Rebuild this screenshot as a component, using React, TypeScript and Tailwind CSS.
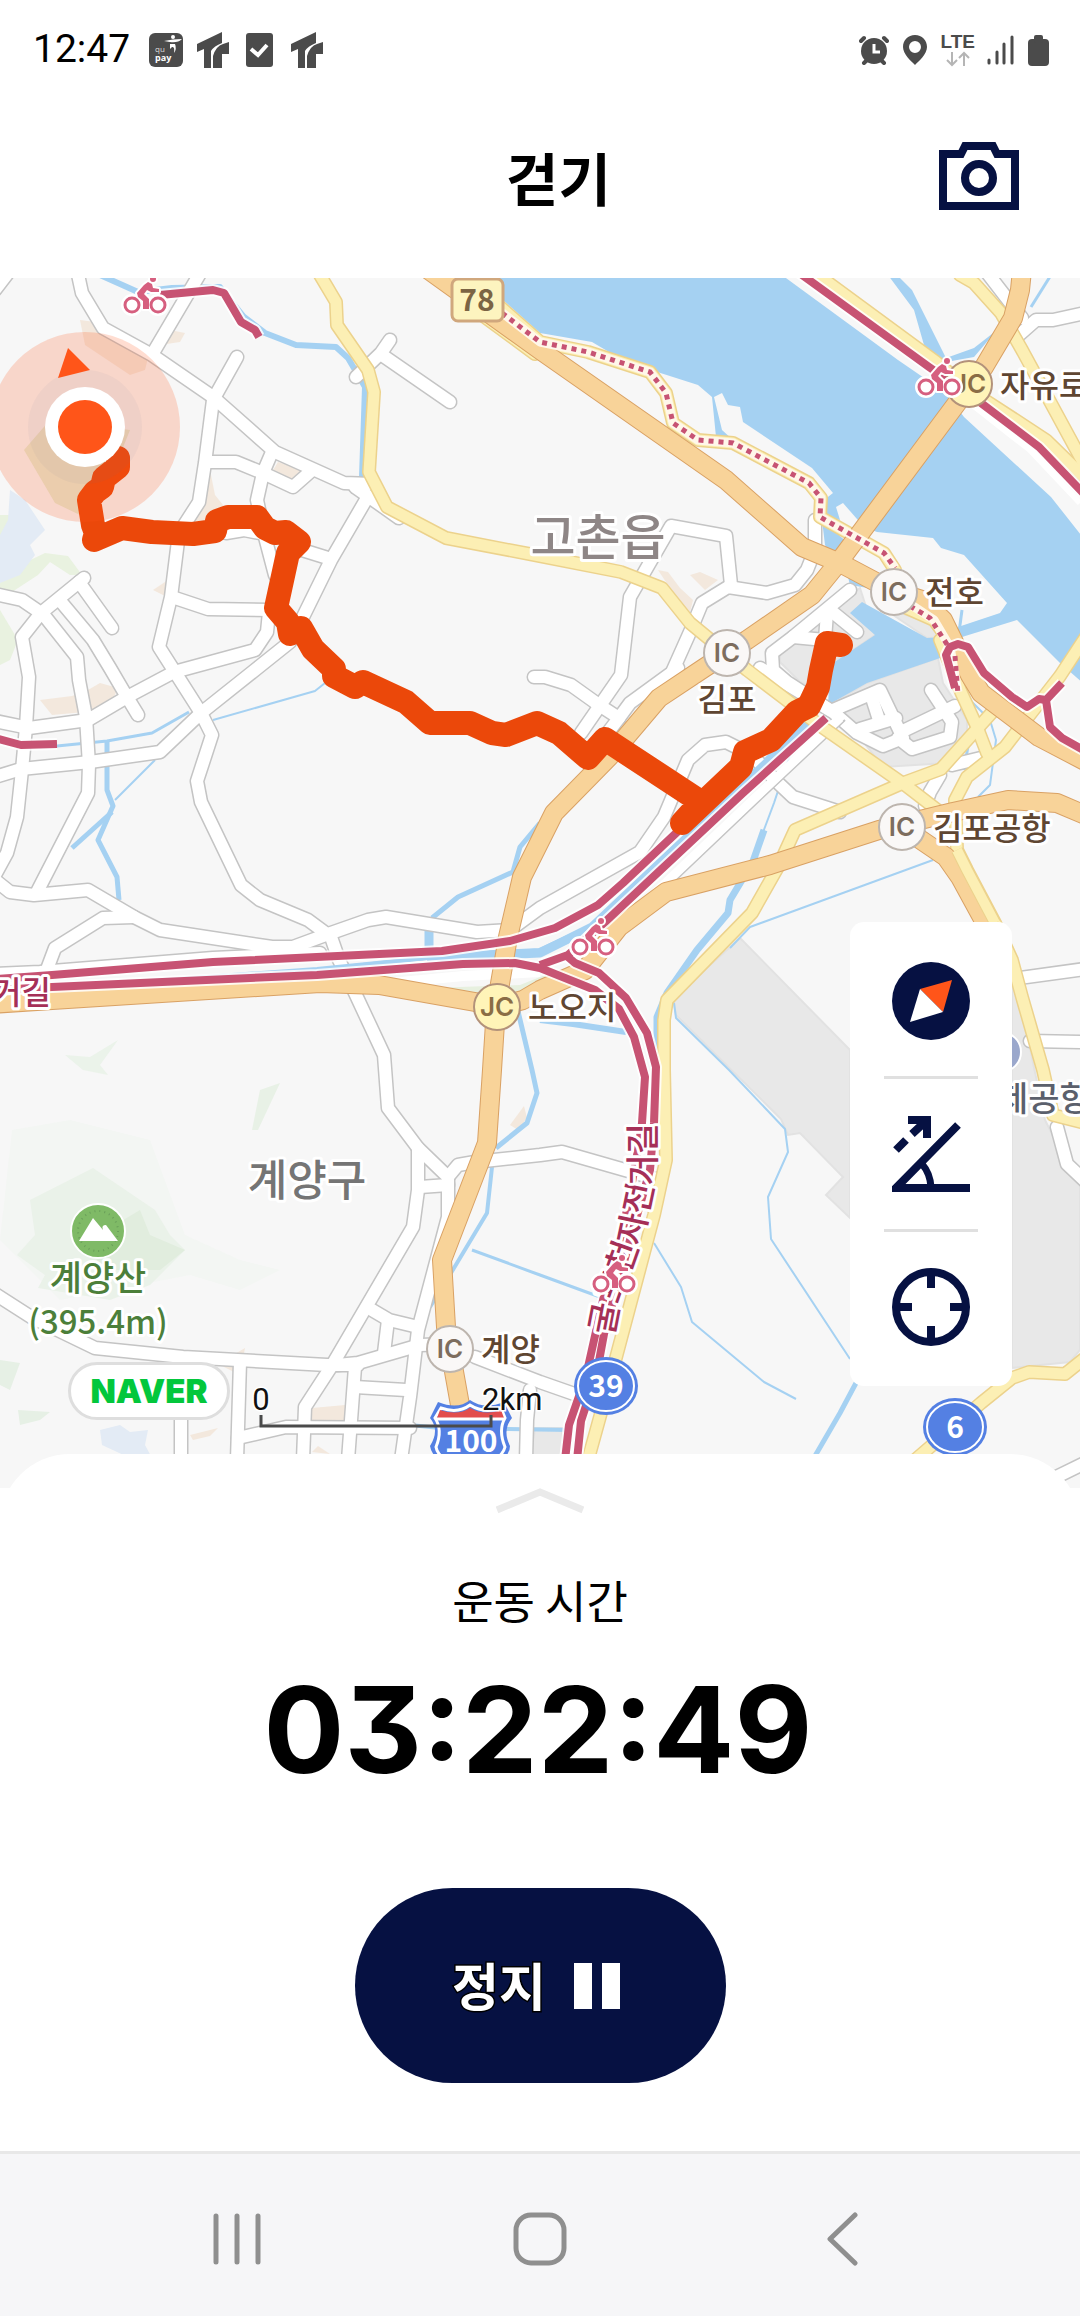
import React from "react";

const kr = "font-['Noto_Sans_CJK_KR','Noto_Sans',sans-serif]";
const NAVY = "#061142";

const streets = [
  "M77 270 L82 293 L103 328 L152 355 L213 397 L275 452 L344 483 L372 484",
  "M355 487 L399 518",
  "M202 270 L153 353",
  "M237 357 L213 400 L205 463 L199 502 L179 533 L171 597 L159 647 L201 713 L212 735 L197 781 L201 802 L241 885 L260 900 L308 920 L331 937 L339 960 L355 993 L384 1055 L388 1108 L418 1148 L448 1177",
  "M207 462 L236 462 L263 473 L293 487 L310 472",
  "M272 452 L263 473 L257 500 L265 537 L275 575",
  "M226 533 L244 530 L270 535",
  "M367 498 L331 560 L300 623 L290 642 L255 670 L201 713 L160 752 L90 762 L21 769 L-5 777",
  "M286 545 L331 559",
  "M172 597 L190 603 L208 609 L270 610",
  "M269 612 L267 632 L255 650 L174 672 L127 697 L88 720 L29 728 L-5 721",
  "M390 340 L381 353 L356 377",
  "M382 355 L450 402",
  "M-5 594 L22 600 L41 613 L84 578",
  "M79 582 L112 628",
  "M62 603 L93 640 L110 668 L127 697 L138 715",
  "M43 614 L77 657 L79 680 L86 717 L89 765 L88 793 L36 894",
  "M41 613 L22 637 L29 677 L26 727 L22 770 L17 817 L7 853 L-5 875",
  "M-5 880 L10 892 L34 895 L88 890 L134 917 L160 930 L272 947 L293 947 L331 933 L368 920 L386 917 L477 932 L510 930 L540 908 L640 852 L664 817 L688 760 L705 745 L726 742 L752 755 L775 780 L793 797 L840 812",
  "M134 917 L103 918 L55 948 L46 972",
  "M-5 974 L40 972 L213 958 L320 953",
  "M815 520 L815 550 L807 570 L795 585 L767 593 L728 587 L702 603 L690 632 L673 670",
  "M731 585 L726 536 L671 526 L630 597 L621 675 L581 733",
  "M534 677 L545 677 L571 685 L599 705 L619 718 L630 703 L678 668",
  "M619 718 L606 735",
  "M760 668 L833 712 L857 733 L883 746 L903 738 L880 690 L833 710",
  "M872 698 L879 720",
  "M860 729 L896 718",
  "M898 738 L912 749 L950 737 L952 722 L931 690",
  "M903 731 L955 706",
  "M850 590 L793 637 L772 653 L773 670 L787 682 L830 710",
  "M830 610 L857 632",
  "M827 612 L825 640 L793 637",
  "M985 270 L1022 318",
  "M1085 313 L1053 320 L1036 320 L1019 335",
  "M1012 979 L1085 969",
  "M1030 1041 L1085 1042",
  "M1057 1127 L1067 1164 L1085 1181",
  "M940 775 L930 792 L925 806",
  "M952 765 L985 757",
  "M448 1177 L458 1165 L475 1162 L540 1155 L562 1152 L660 1180",
  "M475 1357 L540 1382 L580 1396",
  "M530 1390 L527 1420 L526 1460",
  "M418 1148 L418 1190 L413 1227 L331 1367 L305 1407 L303 1460",
  "M420 1187 L448 1185",
  "M448 1177 L448 1217 L418 1330 L410 1397 L401 1460",
  "M372 1310 L389 1320 L418 1327",
  "M388 1320 L384 1353",
  "M337 1365 L358 1363 L420 1345 L450 1344",
  "M-5 1294 L31 1317 L95 1348 L183 1357 L327 1365 L358 1365",
  "M181 1360 L181 1460",
  "M240 1362 L237 1460",
  "M355 1367 L348 1460",
  "M238 1438 L286 1427 L410 1428",
  "M355 1387 L406 1390",
  "M1040 1485 L1085 1463",
  "M-5 290 L8 273",
];

const yellowRoads = [
  "M317 270 L336 302 L337 325 L368 370 L374 392 L369 472 L387 507 L446 538 L540 556 L621 572 L662 588 L690 623 L747 670 L822 727 L905 785 L940 812",
  "M1085 638 L1060 676 L1018 730 L1005 747 L967 777 L955 800 L957 850 L967 870 L995 923 L1012 960 L1022 997 L1043 1070 L1053 1115 L1085 1123",
  "M995 709 L941 769 L903 783 L795 830 L778 867 L752 913 L667 1000 L664 1020 L664 1070 L666 1160 L654 1215 L609 1384 L588 1460",
  "M940 640 L961 692 L977 727 L987 753",
  "M960 275 L974 283 L1001 313 L1022 350 L1085 466",
  "M811 270 L936 362 L974 393 L1046 440 L1085 478",
  "M1085 1358 L1065 1374 L1029 1372 L1012 1378 L981 1403 L915 1460",
  "M478 312 L535 354",
  "M498 305 L540 342 L588 352 L650 372 L666 393 L673 423 L698 440 L733 443 L809 483 L821 498 L820 517 L884 553 L895 570 L888 585",
  "M900 605 L934 620 L945 635",
];

const orangeRoads = [
  "M-10 1004 L52 1000 L320 983 L379 985 L475 1002 L497 1007 L523 1000 L540 990 L585 970 L619 927 L666 892 L770 865 L879 830 L953 812 L1008 800 L1057 803 L1090 817",
  "M902 827 L946 857 L960 877 L990 932",
  "M1022 270 L1020 290 L1013 318 L984 367 L957 403 L838 563 L812 595 L747 640 L704 668 L659 698 L609 757 L554 813 L522 877 L508 937 L496 1007 L492 1070 L487 1143 L442 1260 L446 1327 L460 1405",
  "M430 271 L540 350 L726 480 L802 547 L840 563 L891 590 L922 600 L943 620 L970 675 L981 693 L1039 737 L1085 761",
];

const pinkTrails = [
  "M160 295 L213 290 L224 293 L241 322 L255 330 L259 337",
  "M-5 738 L21 745 L57 744",
  "M-5 979 L52 975 L213 962 L442 951 L510 941 L555 928 L598 905 L623 883 L690 820",
  "M-5 990 L52 987 L317 975 L463 964 L515 963 L540 968 L595 990 L619 1009 L634 1037 L645 1077 L642 1123 L638 1150 L625 1220 L603 1300 L586 1376 L569 1425 L565 1460",
  "M826 718 L743 793 L605 922 L568 955 L540 965",
  "M568 957 L575 963 L599 973 L626 998 L647 1033 L656 1067 L654 1123 L650 1170 L630 1240 L604 1334 L597 1372 L581 1421 L577 1460",
  "M798 272 L929 367 L981 403 L1039 447 L1085 495",
  "M955 688 L946 655 L950 647 L958 644 L968 647 L984 673 L1012 697 L1027 707 L1039 699 L1046 700 L1062 683",
  "M1046 700 L1050 727 L1062 738 L1085 751",
];

const streams: [string, number][] = [
  ["M100 275 L138 292 L172 288 L220 287 L244 317 L265 333 L296 345 L336 347 L348 358 L365 387 L362 477", 6],
  ["M57 746 L107 741 L152 733 L189 712", 3],
  ["M107 740 L107 790 L113 806 L98 840 L117 877 L119 900", 5],
  ["M112 812 L72 848", 5],
  ["M155 760 L115 800", 2],
  ["M213 720 L315 691 L325 683", 2],
  ["M540 823 L520 847 L513 872 L458 897 L432 918", 5],
  ["M429 930 L429 955", 9],
  ["M517 1007 L532 1070 L537 1093 L527 1123 L496 1148", 5],
  ["M492 1167 L487 1213 L451 1273 L430 1307", 4],
  ["M472 1250 L540 1275 L600 1297", 3],
  ["M410 1425 L440 1428 L570 1430", 4],
  ["M540 1020 L573 1024 L626 1032", 6],
  ["M80 990 L317 970 L427 958 L500 955", 4],
  ["M440 958 L540 953 L592 927 L692 833 L809 722", 9],
  ["M790 755 L774 803 L762 835", 2],
  ["M764 830 L750 870", 7],
  ["M742 880 L730 900 L728 913 L697 950 L667 993 L657 1017 L657 1050", 7],
  ["M933 860 L750 927 L730 948", 2],
  ["M674 1003 L676 1018 L729 1070 L785 1129 L788 1152 L768 1197 L771 1239 L850 1359", 2],
  ["M654 1243 L681 1287 L692 1322 L764 1382 L796 1399", 2],
  ["M856 1383 L840 1413 L815 1456", 5],
  ["M1051 275 L1031 307", 3],
  ["M958 640 L962 610", 3],
  ["M970 700 L990 720 L996 740 L990 785 L978 797", 2],
  ["M969 740 L964 770", 3],
];

const greyBlocks = [
  "M740 938 L850 1050 L850 1218 L826 1195 L843 1177 L800 1133 L788 1135 L781 1119 L676 1015 L673 998 L728 949 Z",
  "M1012 985 L1022 1010 L1045 1120 L1070 1170 L1080 1178 V1350 L1070 1362 L1012 1368 Z",
  "M833 703 L867 683 L938 658 L943 683 L967 720 L967 740 L947 763 L883 767 Z",
  "M860 588 L875 635 L850 652 L835 660 L822 690 L800 682 L780 662 L780 650 L800 630 Z",
  "M880 606 L930 623 L947 637 L927 638 Z",
  "M535 1428 H562 V1460 H530 Z",
];

const beigePatches = [
  "M80 320 L95 322 L150 350 L145 370 L130 375 L85 345 Z",
  "M170 330 L185 333 L180 342 L160 345 Z",
  "M210 470 L215 495 L223 505 L218 530 L190 530 L205 495 Z",
  "M278 462 L302 470 L290 480 L272 472 Z",
  "M40 700 L72 696 L88 690 L100 683 L118 688 L110 706 L85 712 L52 715 Z",
  "M168 580 L167 597 L153 590 Z",
  "M658 570 L668 572 L680 588 L693 600 L690 612 L678 600 Z",
  "M690 575 L700 572 L718 580 L705 590 Z",
  "M312 1408 L345 1405 L345 1422 L312 1422 Z",
  "M190 1435 L218 1428 L210 1436 L193 1440 Z",
  "M218 1364 L245 1348 L240 1375 Z",
  "M524 1106 L527 1118 L518 1130 L510 1125 Z",
  "M312 1452 L318 1446 L330 1454 Z",
];

const greenPatches: [string, string][] = [
  ["M12 1130 L70 1120 L150 1140 L185 1235 L240 1260 L280 1270 L240 1290 L190 1275 L60 1300 L0 1240 Z", "#f3f6f3"],
  ["M30 1200 L93 1168 L155 1210 L170 1235 L185 1250 L150 1285 L110 1300 L38 1288 L45 1275 L17 1255 L35 1235 Z", "#eaf2e9"],
  ["M140 1210 L150 1235 L185 1250 L160 1270 L100 1270 L90 1240 Z", "#e1edde"],
  ["M118 1040 L100 1065 L108 1075 L83 1070 L65 1055 L90 1057 Z", "#ebf3ea"],
  ["M280 1083 L260 1090 L252 1130 L258 1130 Z", "#e8f1e6"],
  ["M0 1360 L20 1363 L10 1390 L0 1385 Z", "#e6f0e5"],
  ["M18 1410 L50 1412 L40 1420 L20 1425 Z", "#e6f0e5"],
  ["M0 580 L20 565 L45 553 L68 556 L82 575 L70 575 L50 562 L38 575 L15 590 L0 600 Z", "#e9f2e0"],
  ["M0 515 L10 515 L5 545 L0 550 Z", "#e9f2e0"],
  ["M0 610 L18 640 L10 660 L0 665 Z", "#e9f2e0"],
  ["M24 450 L50 420 L130 430 L110 480 L80 515 L55 503 Z", "#e6ebd2"],
  ["M430 988 L520 985 L545 975 L560 975 L530 1000 L490 1000 Z", "#e7f0df"],
  ["M10 490 L25 500 L45 530 L30 545 L35 555 L20 575 L0 583 V535 L8 520 Z", "#e3ebf5"],
  ["M100 1430 L120 1425 L130 1432 L148 1430 L145 1445 L152 1458 H130 L102 1445 Z", "#e3ebf5"],
];

const junctions = [
  { x: 727, y: 653, kind: "IC" },
  { x: 894, y: 592, kind: "IC" },
  { x: 902, y: 827, kind: "IC" },
  { x: 450, y: 1349, kind: "IC" },
  { x: 497, y: 1007, kind: "JC" },
  { x: 969, y: 384, kind: "JC" },
];

const routeTrack =
  "M118 458 L118 467 L104 478 L102 487 L95 492 L89 500 L93 525 L96 533 L94 540 L122 528 L152 532 L193 534 L215 531 L217 521 L228 517 L257 517 L265 528 L275 533 L286 532 L299 542 L288 553 L276 608 L288 622 L290 634 L301 628 L313 649 L334 669 L334 676 L355 687 L363 682 L406 702 L430 723 L470 723 L492 733 L506 735 L537 723 L559 733 L588 758 L605 739 L701 802 L682 823 L741 767 L745 752 L771 740 L797 712 L809 706 L818 687 L821 670 L827 643 L841 645";

function Cased({ paths, outer, inner, edge, fill }: { paths: string[]; outer: number; inner: number; edge: string; fill: string }) {
  return (
    <g fill="none" strokeLinejoin="round" strokeLinecap="round">
      {paths.map((d) => (
        <path key={d} d={d} stroke={edge} strokeWidth={outer} />
      ))}
      {paths.map((d) => (
        <path key={d} d={d} stroke={fill} strokeWidth={inner} />
      ))}
    </g>
  );
}

function Bike({ x, y }: { x: number; y: number }) {
  const rider = "M-8 -3 L-1 -11 L3 -14 L7 -12 L8 -8 L14 -7 L14 -4 L6 -4 L2 -6 L-1 -2 L4 3 V13 H-2 V5 L-7 1 Z";
  return (
    <g transform={`translate(${x} ${y})`} strokeLinejoin="round">
      <g fill="#fff" stroke="#fff" strokeWidth="4">
        <circle cx="-13" cy="9" r="9" />
        <circle cx="13" cy="9" r="9" />
        <circle cx="8" cy="-17" r="3" />
        <path d={rider} />
      </g>
      <circle cx="-13" cy="9" r="7" fill="#fff" stroke="#d65f7f" strokeWidth="3" />
      <circle cx="13" cy="9" r="7" fill="#fff" stroke="#d65f7f" strokeWidth="3" />
      <g fill="#d65f7f">
        <circle cx="8" cy="-17" r="3" />
        <path d={rider} />
      </g>
    </g>
  );
}

function Label({ x, y, size, color, anchor = "start", weight = 500, children }: { x: number; y: number; size: number; color: string; anchor?: "start" | "middle"; weight?: number; children: string }) {
  return (
    <text x={x} y={y} fontSize={size} fontWeight={weight} fill={color} stroke="#fff" strokeWidth="6" strokeLinejoin="round" paintOrder="stroke" textAnchor={anchor}>
      {children}
    </text>
  );
}

function MapCanvas() {
  return (
    <svg viewBox="0 278 1080 1210" className={`block h-auto w-full ${kr}`} role="img" aria-label="지도">
      <rect x="0" y="278" width="1080" height="1210" fill="#f7f7f7" />
      {greenPatches.map(([d, c]) => (
        <path key={d} d={d} fill={c} />
      ))}
      {beigePatches.map((d) => (
        <path key={d} d={d} fill="#f3e8dd" />
      ))}
      <path
        fill="#a5d1f2"
        d="M495 270 L503 300 L540 333 L592 342 L626 362 L698 385 L712 397 L716 437 L733 440 L722 430 L714 397 L722 393 L728 405 L740 407 L743 422 L812 468 L833 493 L824 500 L826 517 L840 520 L836 507 L843 503 L864 527 L877 532 L933 538 L941 548 L964 555 L1007 603 L1000 613 L958 627 L962 637 L1017 620 L1060 663 L1085 685 V540 L1051 497 L964 417 L946 393 L898 360 L775 270 Z"
      />
      <path fill="#a5d1f2" d="M888 275 L914 310 L926 352 L946 362 L974 357 L997 330 L974 348 L946 358 L912 290 L897 275 Z" />
      <path fill="#a5d1f2" d="M822 520 L850 545 L840 568 L825 545 Z M845 565 L870 573 L890 580 L880 590 L850 585 Z" />
      {greyBlocks.map((d) => (
        <path key={d} d={d} fill="#e8e8e8" stroke="#e2e2e2" strokeWidth="2" />
      ))}
      <path fill="#a5d1f2" d="M862 602 L927 638 L945 637 L943 657 L867 683 L828 705 L830 665 L875 635 L850 613 Z" />
      <g fill="none" stroke="#a5d1f2" strokeLinejoin="round">
        {streams.map(([d, w]) => (
          <path key={d} d={d} strokeWidth={w} />
        ))}
      </g>
      <Cased paths={streets} outer={15} inner={12} edge="#c4c4c4" fill="#fff" />
      <path d="M970 403 L1030 450 L1080 503" stroke="#fff" strokeWidth="6" fill="none" />
      <path d="M845 720 L760 800 L660 895" stroke="#c4c4c4" strokeWidth="2" fill="none" />
      <path d="M840 718 L755 798 L655 893" stroke="#fff" strokeWidth="9" fill="none" />
      <path d="M380 984 L463 976 L540 972" stroke="#fff" strokeWidth="10" fill="none" />
      <path d="M80 986 L317 969 L427 958" stroke="#a5d1f2" strokeWidth="4" fill="none" />
      <path d="M427 957 L540 952 L592 928 L692 833 L809 722" stroke="#a5d1f2" strokeWidth="8" fill="none" />
      <Cased paths={yellowRoads} outer={14} inner={11} edge="#ecd28c" fill="#fcefb4" />
      <Cased paths={orangeRoads} outer={20} inner={18} edge="#d9a164" fill="#f8d399" />
      <path d="M957 850 L967 870 L995 923" stroke="#ecd28c" strokeWidth="12" fill="none" />
      <path d="M957 850 L967 870 L995 923" stroke="#fcefb4" strokeWidth="10" fill="none" />
      <g fill="none">
        <path d="M500 311 L540 342 L588 352 L650 372 L666 393 L673 423 L698 440 L733 443 L809 483 L821 498 L820 517 L884 553 L895 568 M910 604 L934 620 L950 647 L958 692" stroke="#fff7ea" strokeWidth="9" strokeLinejoin="round" />
        {pinkTrails.map((d) => (
          <path key={d} d={d} stroke="#fff" strokeOpacity="0.85" strokeWidth="12" strokeLinejoin="round" />
        ))}
        <path d="M502 313 L540 342 L588 352 L650 372 L666 393 L673 423 L698 440 L733 443 L809 483 L821 498 L820 517 L884 553 L895 568 M910 606 L930 618 L948 646 M955 656 L958 695" stroke="#c75373" strokeWidth="5" strokeDasharray="5 5" />
        {pinkTrails.map((d) => (
          <path key={d} d={d} stroke="#c75373" strokeWidth="8" strokeLinejoin="round" />
        ))}
      </g>

      {junctions.map(({ x, y, kind }) => (
        <g key={`${x}-${y}`}>
          <circle cx={x} cy={y} r="23" fill={kind === "IC" ? "#faf8f7" : "#fff4b8"} stroke={kind === "IC" ? "#bdb5ae" : "#b3927a"} strokeWidth="2" />
          <text x={x} y={y + 9} fontSize="26" fontWeight="600" textAnchor="middle" fill={kind === "IC" ? "#7d6d5e" : "#8a6d45"} className="font-['Inter',sans-serif]">
            {kind}
          </text>
        </g>
      ))}

      <rect x="452" y="279" width="51" height="42" rx="6" fill="#fdf4bf" stroke="#d0a77d" strokeWidth="3" />
      <text x="477" y="311" fontSize="30" fontWeight="700" textAnchor="middle" fill="#7b6444">78</text>

      {[
        { x: 606, y: 1386, n: "39" },
        { x: 955, y: 1427, n: "6" },
      ].map(({ x, y, n }) => (
        <g key={n}>
          <ellipse cx={x} cy={y} rx="32" ry="29" fill="#5480e3" />
          <ellipse cx={x} cy={y} rx="28" ry="25" fill="none" stroke="#fff" strokeWidth="2" />
          <text x={x} y={y + 11} fontSize="30" fontWeight="700" textAnchor="middle" fill="#fff">{n}</text>
        </g>
      ))}

      <g>
        <path d="M438 1402 Q458 1410 470 1400 Q484 1410 504 1402 L512 1418 Q502 1430 510 1446 Q510 1462 470 1480 Q432 1462 430 1446 Q440 1430 430 1418 Z" fill="#5480e3" />
        <path d="M441 1408 Q458 1414 470 1405 Q484 1414 501 1408 L505 1418 Q498 1430 505 1447 Q502 1460 470 1474 Q438 1460 436 1447 Q443 1430 435 1418 Z" fill="#5480e3" stroke="#fff" strokeWidth="3" />
        <path d="M440 1410 Q458 1416 470 1408 Q484 1416 501 1410 L504 1418 H437 Z" fill="#e24d4d" />
        <path d="M436 1419 H505" stroke="#fff" strokeWidth="3" />
        <text x="471" y="1452" fontSize="30" fontWeight="700" textAnchor="middle" fill="#fff">100</text>
      </g>

      <circle cx="1001" cy="1052" r="20" fill="#9ba8cc" stroke="#fff" strokeWidth="2" />
      <circle cx="98" cy="1231" r="27" fill="#7fba66" stroke="#fff" strokeWidth="2" />
      <circle cx="98" cy="1231" r="20" fill="none" stroke="#6a9f5a" strokeWidth="2" strokeDasharray="1 4" />
      <path d="M79 1241 L93 1218 L103 1230 Q101 1225 106 1225 L118 1241 Z" fill="#fff" />

      <Label x={598} y={555} size={49} color="#8e8686" anchor="middle">고촌읍</Label>
      <Label x={307} y={1196} size={43} color="#757575" anchor="middle">계양구</Label>
      <Label x={727} y={711} size={32} color="#5f4632" anchor="middle">김포</Label>
      <Label x={925} y={604} size={32} color="#5f4632">전호</Label>
      <Label x={1000} y={397} size={32} color="#5f4632">자유로</Label>
      <Label x={933} y={840} size={32} color="#5f4632">김포공항</Label>
      <Label x={528} y={1019} size={32} color="#5f4632">노오지</Label>
      <Label x={481} y={1361} size={32} color="#5f4632">계양</Label>
      <Label x={997} y={1111} size={34} color="#5b606c">제공항</Label>
      <Label x={98} y={1291} size={35} color="#4c7f3a" anchor="middle">계양산</Label>
      <Label x={98} y={1334} size={33} color="#4c7f3a" anchor="middle">(395.4m)</Label>
      <Label x={-8} y={1004} size={32} color="#a52f57">거길</Label>
      <path id="trail-name" d="M613 1336 L620 1300 L644 1232 L655 1180 L655 1115" fill="none" />
      <text fontSize="34" fontWeight="500" fill="#a52f57" stroke="#fff" strokeWidth="6" strokeLinejoin="round" paintOrder="stroke">
        <textPath href="#trail-name">굴포천자전거길</textPath>
      </text>

      <Bike x={145} y={296} />
      <Bike x={939} y={378} />
      <Bike x={593} y={938} />
      <Bike x={614} y={1275} />

      <path d={routeTrack} fill="none" stroke="#eb480a" strokeWidth="24" strokeLinejoin="round" strokeLinecap="round" />
      <circle cx="85" cy="427" r="95" fill="#ff5519" fillOpacity="0.2" />
      <circle cx="85" cy="427" r="57" fill="#6478a0" fillOpacity="0.06" />
      <circle cx="85" cy="427" r="40" fill="#fff" />
      <circle cx="85" cy="427" r="27" fill="#ff5519" />
      <path d="M68 348 L90 370 L58 378 Z" fill="#ff5519" />

      <path d="M261 1415 V1426 H491 V1415" fill="none" stroke="#4a4a4a" strokeWidth="3" />
      <g fontSize="31" fill="#111" stroke="#fff" strokeWidth="3" paintOrder="stroke" className="font-['Roboto',sans-serif]">
        <text x="261" y="1410" textAnchor="middle">0</text>
        <text x="482" y="1410">2km</text>
      </g>
    </svg>
  );
}

function TrIcon() {
  return (
    <svg width="32" height="36" viewBox="0 0 32 36" fill="#4b4b4b" aria-hidden="true">
      <path d="M0 12 L25 0 V11 Q17 14 14 19 V36 H7 V17 L0 20 Z" />
      <path d="M16 36 V24 Q19 14 26 12 L32 10 V22 H25 V36 Z" />
    </svg>
  );
}

function StatusBar() {
  return (
    <div className="flex h-[98px] items-center justify-between pr-[31px] pl-[33px]">
      <div className="flex items-center">
        <span className="font-['Roboto',sans-serif] text-[39px] leading-[44px] text-black">12:47</span>
        <div className="ml-[19px] flex items-center gap-3.5 pt-0.5">
          <svg width="34" height="34" viewBox="0 0 34 34" aria-hidden="true">
            <rect width="34" height="34" rx="6" fill="#4b4b4b" />
            <path d="M15 8 Q24 6 33 6 Q29 10 21 9 Z M21 11 H26 Q28 16 25 20 Q26 13 23 14 L21 16 Z" fill="#fff" />
            <circle cx="24" cy="4" r="2" fill="#fff" />
            <text x="6" y="19" fontSize="8" fill="#ddd" className="font-['Open_Sans',sans-serif]">qu</text>
            <text x="6" y="28" fontSize="9" fontWeight="700" fill="#fff" className="font-['Open_Sans',sans-serif]">pay</text>
          </svg>
          <TrIcon />
          <svg width="34" height="34" viewBox="0 0 34 34" aria-hidden="true">
            <rect x="3" width="27" height="34" rx="3" fill="#4b4b4b" />
            <path d="M8 16 L15 22 L24 12" fill="none" stroke="#fff" strokeWidth="4" />
          </svg>
          <TrIcon />
        </div>
      </div>
      <div className="flex items-center pt-0.5">
        <svg width="30" height="30" viewBox="0 0 30 30" className="mr-3.5" aria-hidden="true">
          <circle cx="15" cy="16" r="13" fill="#4b4b4b" />
          <g stroke="#4b4b4b" strokeWidth="4" strokeLinecap="round">
            <path d="M2 6 L5 3 M28 6 L25 3 M5 28 L8 25 M25 28 L22 25" />
          </g>
          <path d="M15 9 V17 H21" stroke="#fff" strokeWidth="3" fill="none" />
        </svg>
        <svg width="24" height="30" viewBox="0 0 24 30" className="mr-3.5" aria-hidden="true">
          <path fillRule="evenodd" d="M12 0 C5 0 0 5 0 12 C0 19 8 26 12 30 C16 26 24 19 24 12 C24 5 19 0 12 0 Z M12 6 A6 6 0 1 1 12 18 A6 6 0 1 1 12 6 Z" fill="#4b4b4b" />
        </svg>
        <div className="mr-3 flex flex-col items-center">
          <span className="font-['Liberation_Sans',sans-serif] text-[19px] leading-[18px] font-bold text-[#4b4b4b]">LTE</span>
          <svg width="24" height="16" viewBox="0 0 24 16" fill="none" stroke="#b5b5b5" strokeWidth="2" aria-hidden="true">
            <path d="M6 1 V14 M1 9 L6 14 L11 9 M18 15 V2 M13 7 L18 2 L23 7" />
          </svg>
        </div>
        <svg width="27" height="30" viewBox="0 0 27 30" className="mr-3.5" stroke="#4b4b4b" strokeWidth="3" strokeLinecap="round" aria-hidden="true">
          <path d="M2 25 V28 M10 17 V28 M17 9 V28 M25 2 V28" />
        </svg>
        <svg width="21" height="31" viewBox="0 0 21 31" fill="#4b4b4b" aria-hidden="true">
          <rect y="4" width="21" height="27" rx="4" />
          <rect x="6" width="9" height="8" rx="2" />
        </svg>
      </div>
    </div>
  );
}

function MapButton({ label, children }: { label: string; children: React.ReactNode }) {
  return (
    <button type="button" aria-label={label} className="flex h-[150px] w-full items-center justify-center">
      {children}
    </button>
  );
}

export default function App() {
  return (
    <div className={`flex min-h-screen flex-col bg-white text-black ${kr}`}>
      <StatusBar />

      <header className="grid h-[180px] grid-cols-[1fr_auto_1fr] items-center pr-[61px] pb-6 pl-[98px]">
        <h1 className="col-start-2 text-[57px] leading-[64px] font-bold">걷기</h1>
        <button type="button" aria-label="카메라" className="justify-self-end">
          <svg width="80" height="68" viewBox="0 0 80 68" fill="none" stroke={NAVY} strokeWidth="8" aria-hidden="true">
            <path d="M4 12 H22 L26 4 H54 L58 12 H76 V64 H4 Z" />
            <circle cx="40" cy="36" r="14" />
          </svg>
        </button>
      </header>

      <main className="flex flex-1 flex-col">
        <section className="relative overflow-hidden">
          <MapCanvas />
          <a
            href="#naver"
            className="absolute bottom-[68px] left-[68px] flex h-[58px] w-[162px] items-center justify-center rounded-full border-3 border-[#dedede] bg-white font-['Inter',sans-serif] text-[33px] leading-none font-black text-[#03c73c]"
          >
            NAVER
          </a>
          <div className="absolute right-[68px] bottom-[102px] flex w-[162px] flex-col items-center rounded-[14px] bg-white py-1">
            <MapButton label="나침반">
              <svg width="78" height="78" viewBox="0 0 78 78" aria-hidden="true">
                <circle cx="39" cy="39" r="39" fill={NAVY} />
                <path d="M60 18 L28 27 L51 50 Z" fill="#ff5519" />
                <path d="M18 60 L28 27 L51 50 Z" fill="#fff" />
              </svg>
            </MapButton>
            <div className="h-[3px] w-[94px] bg-[#e0e0e0]" />
            <MapButton label="기울기">
              <svg width="78" height="78" viewBox="0 0 78 78" fill="none" stroke={NAVY} strokeWidth="8" aria-hidden="true">
                <path d="M78 73 H4 L66 10" />
                <path d="M30 49 Q38 58 39 72" strokeWidth="7" />
                <path d="M4 35 L14 25 M20 19 L34 6" />
                <path d="M16 5 H35 V23" />
              </svg>
            </MapButton>
            <div className="h-[3px] w-[94px] bg-[#e0e0e0]" />
            <MapButton label="현재 위치">
              <svg width="78" height="78" viewBox="0 0 78 78" fill="none" stroke={NAVY} strokeWidth="8" aria-hidden="true">
                <circle cx="39" cy="39" r="35" />
                <path d="M39 4 V20 M39 58 V74 M4 39 H20 M58 39 H74" />
              </svg>
            </MapButton>
          </div>
        </section>

        <section className="relative -mt-[34px] flex flex-1 flex-col items-center rounded-t-[70px] bg-white pt-8">
          <button type="button" aria-label="펼치기">
            <svg width="88" height="28" viewBox="0 0 88 28" fill="none" stroke="#eaeaea" strokeWidth="7" aria-hidden="true">
              <path d="M1 24 L44 6 L87 24" />
            </svg>
          </button>
          <h2 className="mt-[54px] text-[45px] leading-[64px]">운동 시간</h2>
          <p className="mt-[34px] pr-1 font-['Inter',sans-serif] text-[120px] leading-[128px] font-bold [font-feature-settings:'cv09']">03:22:49</p>
          <button type="button" className="mt-[94px] flex h-[195px] w-[371px] items-center justify-center gap-7 rounded-full bg-[#061142] pr-2 text-white">
            <span className="pb-1 text-[51px] leading-[64px] font-bold [-webkit-text-stroke:3px_#000] [paint-order:stroke_fill]">정지</span>
            <svg width="46" height="46" viewBox="0 0 46 46" fill="#fff" aria-hidden="true">
              <path d="M0 0 H18 V46 H0 Z M28 0 H46 V46 H28 Z" />
            </svg>
          </button>
        </section>
      </main>

      <nav className="grid h-[165px] grid-cols-3 items-center justify-items-center border-t-3 border-[#e8e8e8] bg-[#f6f6f8] px-[85px]">
        <button type="button" aria-label="최근 앱" className="pt-2">
          <svg width="54" height="54" viewBox="0 0 54 54" stroke="#8f8f8f" strokeWidth="5" strokeLinecap="round" aria-hidden="true">
            <path d="M6 4 V50 M27 4 V50 M48 4 V50" />
          </svg>
        </button>
        <button type="button" aria-label="홈" className="pt-2">
          <svg width="54" height="54" viewBox="0 0 54 54" fill="none" stroke="#8f8f8f" strokeWidth="5" aria-hidden="true">
            <rect x="3" y="3" width="48" height="48" rx="15" />
          </svg>
        </button>
        <button type="button" aria-label="뒤로" className="pt-2">
          <svg width="54" height="54" viewBox="0 0 54 54" fill="none" stroke="#8f8f8f" strokeWidth="5" strokeLinecap="round" strokeLinejoin="round" aria-hidden="true">
            <path d="M39 3 L14 27 L39 51" />
          </svg>
        </button>
      </nav>
    </div>
  );
}
